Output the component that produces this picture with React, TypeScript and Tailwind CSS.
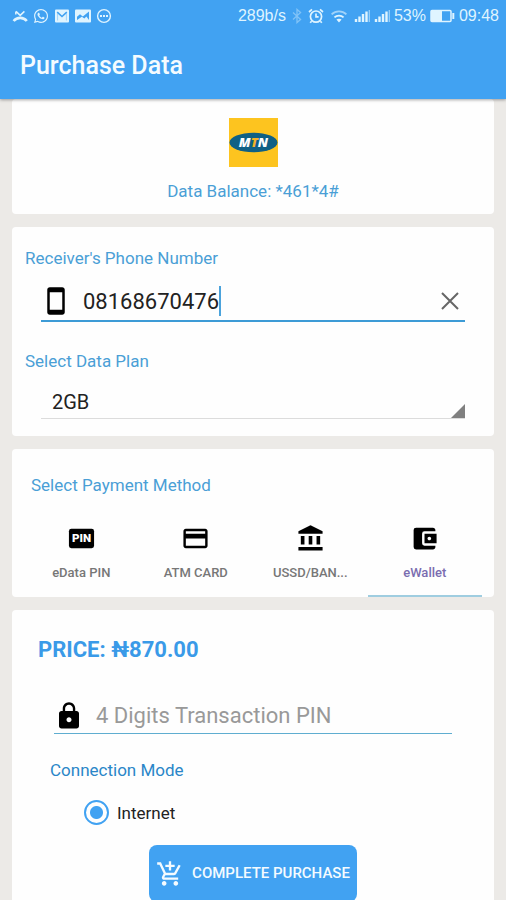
import { useState } from 'react';
import type { ReactNode } from 'react';
import {
  MdAccountBalance,
  MdAccountBalanceWallet,
  MdAddShoppingCart,
  MdCreditCard,
  MdLock,
  MdStayCurrentPortrait
} from 'react-icons/md';
import { FaWhatsapp } from 'react-icons/fa';

const StatusBar = () => (
  <div className="flex h-8 items-center justify-between pl-3 pr-[7px] text-[#dff4ff]">
    <div className="flex items-center gap-[5px]">
      {/* Missed call */}
      <svg viewBox="0 0 16 16" className="h-4 w-4" fill="none" stroke="currentColor">
        <path d="M4 3.400 8.200 7.400l4.200-4M3.800 6.600V3.400" strokeWidth="1.500" />
        <path d="M1.600 13c3.400-4.200 9.800-4.200 13.200 0" strokeWidth="2.600" />
      </svg>
      <FaWhatsapp className="h-4 w-4" />
      {/* Mail */}
      <svg viewBox="0 0 16 16" className="h-4 w-4">
        <rect x="1" y="1.500" width="14" height="13" rx="1" fill="currentColor" />
        <path d="M3.600 12.500v-7M12.400 5.500v7" stroke="#41a2f2" strokeOpacity="0.4" />
        <path d="M3.200 4.200 8 8.500l4.800-4.300" fill="none" stroke="#41a2f2" strokeWidth="1.600" />
      </svg>
      {/* Gallery */}
      <svg viewBox="0 0 16 16" className="h-4 w-4">
        <rect y="1.500" width="16" height="13" rx="1" fill="currentColor" />
        <path d="M2 12V8.800l3-2.600 2.800 2.200L14 3.600V12l-2.600-3.400-2 2-2.600-1.800z" fill="#41a2f2" />
      </svg>
      <svg viewBox="0 0 16 16" className="h-4 w-4" fill="none" stroke="currentColor" strokeWidth="1.400">
        <circle cx="8" cy="8" r="6.400" />
        <path d="M4 8h2M7 8h2M10 8h2" strokeWidth="1.800" />
      </svg>
    </div>
    <div className="flex items-center gap-1 font-['Liberation_Sans',sans-serif] text-base">
      <span>289b/s</span>
      {/* Bluetooth */}
      <svg viewBox="0 0 14 16" className="h-4 w-3.5 opacity-40" fill="none" stroke="currentColor" strokeWidth="1.300">
        <path d="m3 4.400 7.600 7L7 14.600V1.400l3.600 3.200-7.600 7" />
      </svg>
      {/* Alarm */}
      <svg viewBox="0 0 16 16" className="h-4 w-4" fill="none" stroke="currentColor" strokeWidth="1.700">
        <circle cx="8" cy="8.600" r="5.600" />
        <path d="M8 5.400v3.400h2.600M1 4l3-2.600M15 4l-3-2.600M3.600 13.200l-1.400 1.600M12.400 13.200l1.400 1.600" />
      </svg>
      {/* Wi-Fi */}
      <svg viewBox="0 0 20 16" className="mx-px h-4 w-5" fill="none" stroke="currentColor" strokeWidth="1.800">
        <path d="M2.600 6.400c4.200-4 10.600-4 14.800 0" className="opacity-60" />
        <path d="M5.400 9.400c2.600-2.400 6.600-2.400 9.200 0" />
        <path d="m7.400 11.600 2.600 2.900 2.600-2.900c-1.500-1.300-3.700-1.300-5.200 0z" fill="currentColor" stroke="none" />
      </svg>
      {[0, 1].map((sim) => (
        <svg key={sim} viewBox="0 0 16 16" className="h-4 w-4" stroke="currentColor" strokeWidth="2.400">
          <path d="M2 14v-3M5.500 14V8.500M9 14V6M12.500 14V3.500" />
          <path d="M15.300 14V2" strokeWidth="1.200" className="opacity-60" />
        </svg>
      ))}
      <span>53%</span>
      {/* Battery */}
      <svg viewBox="0 0 25 14" className="h-3.5 w-[25px]" fill="none">
        <rect x="1" y="1.500" width="20" height="11" rx="1" stroke="currentColor" strokeWidth="1.500" />
        <rect x="1" y="1.500" width="11" height="11" fill="currentColor" />
        <path d="M23.300 4v6" stroke="currentColor" strokeWidth="2" />
      </svg>
      <span>09:48</span>
    </div>
  </div>
);

const PinIcon = ({ className }: { className: string }) => (
  <svg viewBox="0 0 30 30" className={className}>
    <rect x="2" y="5" width="26" height="20" rx="2.500" fill="currentColor" />
    <text
      x="15"
      y="19"
      textAnchor="middle"
      className="font-[Roboto,sans-serif] text-[12px] font-black"
      fill="#fff"
    >
      PIN
    </text>
  </svg>
);

const Card = ({ className, children }: { className: string; children: ReactNode }) => (
  <section className={`mx-3 shrink-0 rounded-[4px] bg-[#fefefe] ${className}`}>{children}</section>
);

const methods = [
  { id: 'pin', label: 'eData PIN', Icon: PinIcon },
  { id: 'card', label: 'ATM CARD', Icon: MdCreditCard },
  { id: 'bank', label: 'USSD/BAN...', Icon: MdAccountBalance },
  { id: 'wallet', label: 'eWallet', Icon: MdAccountBalanceWallet }
];

export default function App() {
  const [phone, setPhone] = useState('08168670476');
  const [plan, setPlan] = useState('2GB');
  const [method, setMethod] = useState('wallet');
  const [pin, setPin] = useState('');

  return (
    <div className="flex h-screen flex-col bg-[#eceae7] font-[Roboto,sans-serif]">
      <header className="relative z-10 bg-[#41a2f2] shadow-[0_1px_3px_rgba(0,0,0,0.35)]">
        <StatusBar />
        <h1 className="flex h-[67px] items-center px-5 text-[25px] font-medium text-[#f4fbff]">Purchase Data</h1>
      </header>

      <main className="flex flex-1 flex-col gap-[13px] overflow-y-auto [scrollbar-width:none]">
        {/* Network */}
        <Card className="flex flex-col items-center gap-3 pb-[11px] pt-[19px]">
          <svg viewBox="0 0 49 49" className="h-[49px] w-[49px]" role="img" aria-label="MTN">
            <rect width="49" height="49" fill="#fdc41f" />
            <ellipse cx="24.500" cy="24.500" rx="24" ry="9.800" fill="#0f6085" />
            <text
              x="24.500"
              y="29"
              textAnchor="middle"
              className="font-['Open_Sans',sans-serif] text-[13px] font-extrabold italic"
              fill="#fff"
            >
              M<tspan fill="#f3b229">T</tspan>N
            </text>
          </svg>
          <p className="text-[17px] leading-6 text-[#4a9fd6]">Data Balance: *461*4#</p>
        </Card>

        {/* Receiver and plan */}
        <Card className="px-[13px] pb-[17px] pt-[19px]">
          <label htmlFor="phone" className="block text-[17px] leading-6 text-[#4a9fd6]">
            Receiver's Phone Number
          </label>
          <div className="mx-4 mt-3 flex h-10 items-center border-b-2 border-[#3d9bd6]">
            <MdStayCurrentPortrait className="h-[30px] w-[30px] text-black" />
            <input
              id="phone"
              type="tel"
              value={phone}
              onChange={(e) => setPhone(e.target.value)}
              className="ml-3 min-w-4 text-[22px] text-[#222] caret-transparent outline-none [field-sizing:content]"
            />
            <span className="h-[30px] w-0.5 bg-[#4ba3dc]" />
            <button type="button" aria-label="Clear" onClick={() => setPhone('')} className="ml-auto">
              <svg viewBox="0 0 30 30" className="h-[30px] w-[30px]" stroke="#666" strokeWidth="2">
                <path d="m7 7 16 16M23 7 7 23" />
              </svg>
            </button>
          </div>
          <label htmlFor="plan" className="mt-[27px] block text-[17px] leading-6 text-[#4a9fd6]">
            Select Data Plan
          </label>
          <div className="mx-4 mt-[14px] flex h-8 items-end border-b border-[#dcdcdc]">
            <select
              id="plan"
              value={plan}
              onChange={(e) => setPlan(e.target.value)}
              className="h-8 flex-1 appearance-none pl-[11px] text-xl text-[#222] outline-none"
            >
              <option>1GB</option>
              <option>2GB</option>
              <option>5GB</option>
            </select>
            <svg viewBox="0 0 14 14" className="h-3.5 w-3.5">
              <path d="M14 0v14H0z" fill="#808080" />
            </svg>
          </div>
        </Card>

        {/* Payment method */}
        <Card className="px-3 pt-6">
          <h2 className="ml-[7px] text-[17px] leading-6 text-[#4a9fd6]">Select Payment Method</h2>
          <div role="tablist" className="mt-6 grid grid-cols-4">
            {methods.map(({ id, label, Icon }) => (
              <button
                key={id}
                type="button"
                role="tab"
                aria-selected={method === id}
                onClick={() => setMethod(id)}
                className={`flex h-[76px] min-w-0 flex-col items-center gap-[10px] border-b-2 pt-[3px] ${
                  method === id ? 'border-[#9fcde0] text-[#7a6db0]' : 'border-transparent text-[#777]'
                }`}
              >
                <Icon className="h-[29px] w-[29px] shrink-0 text-black" />
                <span className="text-[13px] font-medium leading-5">{label}</span>
              </button>
            ))}
          </div>
        </Card>

        {/* Checkout */}
        <Card className="px-[26px] pb-6 pt-6">
          <h2 className="text-[22px] font-bold leading-8 text-[#3a9ae8]">PRICE: ₦870.00</h2>
          <div className="mx-4 mt-8 flex h-9 items-center border-b border-[#5fadd0]">
            <MdLock className="h-[30px] w-[30px] shrink-0 text-black" />
            <input
              type="password"
              aria-label="4 Digits Transaction PIN"
              placeholder="4 Digits Transaction PIN"
              maxLength={4}
              value={pin}
              onChange={(e) => setPin(e.target.value)}
              className="ml-3 min-w-0 flex-1 text-[22px] text-[#222] outline-none placeholder:text-[#999]"
            />
          </div>
          <fieldset className="mt-6">
            <legend className="ml-3 text-[17px] leading-6 text-[#2a86c8]">Connection Mode</legend>
            <label className="ml-[46px] mt-[18px] flex w-fit items-center gap-2 text-[17px] leading-6 text-[#222]">
              <input
                type="radio"
                name="connection"
                defaultChecked
                className="h-[25px] w-[25px] appearance-none rounded-full border-2 border-[#41a2f2] checked:bg-[radial-gradient(circle,#41a2f2_6px,transparent_7px)]"
              />
              Internet
            </label>
          </fieldset>
          <button
            type="button"
            className="mx-auto mt-5 flex h-[57px] items-center gap-2 rounded-lg bg-[#41a2f2] px-[7px] text-[15px] font-medium text-[#f4fbff]"
          >
            <MdAddShoppingCart className="h-7 w-7" />
            COMPLETE PURCHASE
          </button>
        </Card>
      </main>
    </div>
  );
}
